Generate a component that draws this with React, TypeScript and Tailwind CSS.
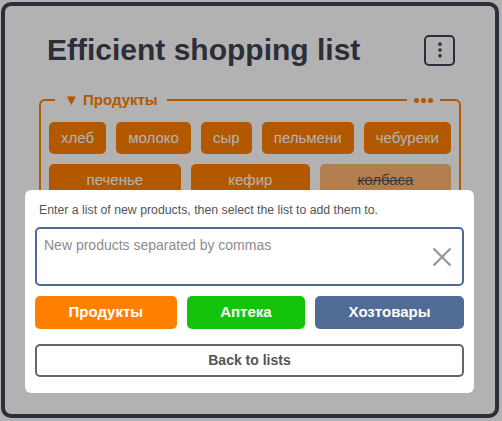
import { EllipsisVertical } from 'lucide-react';

const products = [
    { name: 'хлеб', done: false },
    { name: 'молоко', done: false },
    { name: 'сыр', done: false },
    { name: 'пельмени', done: false },
    { name: 'чебуреки', done: false },
    { name: 'печенье', done: false },
    { name: 'кефир', done: false },
    { name: 'колбаса', done: true },
];

const lists = [
    { name: 'Продукты', color: 'bg-[#ff7f00]' },
    { name: 'Аптека', color: 'bg-[#14c40c]' },
    { name: 'Хозтовары', color: 'bg-[#506b94]' },
];

const App = () => {
    return (
        <div className="h-[421px] bg-white font-['Liberation_Sans',Arial,sans-serif] overflow-hidden">
            <div className="ml-px mt-[2px] w-[498px] h-[416px] border-4 border-[#3f4353] rounded-[10px] bg-white px-[34px] pt-[26px] overflow-hidden">
                <div className="flex items-center justify-between pl-[8px] pr-[6px]">
                    <h1 className="text-[30px] leading-9 font-bold text-[#3f4353]">Efficient shopping list</h1>
                    <button className="w-[31px] h-[31px] border-2 border-[#3f4353] rounded-[5px] flex items-center justify-center text-[#3f4353]">
                        <EllipsisVertical size={20} strokeWidth={2.4} />
                    </button>
                </div>

                <div className="relative mt-[22px]">
                    <fieldset className="border-2 border-[#ff8000] rounded-md px-2 pt-3 pb-2">
                        <legend className="ml-[6px] px-[9px] text-[15px] leading-5 font-bold text-[#ff8000]">▼ Продукты</legend>
                        <div className="flex flex-wrap gap-[10px]">
                            {products.map(p =>
                                <div key={p.name} className={p.done
                                    ? "flex-auto text-center px-3 py-[5px] rounded-[5px] bg-[#ffb572] text-[#555] line-through text-[15px] leading-[22px]"
                                    : "flex-auto text-center px-3 py-[5px] rounded-[5px] bg-[#ff8000] text-white text-[15px] leading-[22px]"}>
                                    {p.name}
                                </div>
                            )}
                        </div>
                    </fieldset>
                    <div className="absolute top-[5px] right-[21px] h-[10px] w-[33px] bg-white flex items-center justify-center gap-[2px]">
                        <span className="w-[5px] h-[5px] rounded-full bg-[#ff8000]"></span>
                        <span className="w-[5px] h-[5px] rounded-full bg-[#ff8000]"></span>
                        <span className="w-[5px] h-[5px] rounded-full bg-[#ff8000]"></span>
                    </div>
                </div>
            </div>

            {/* add products dialog */}
            <div className="fixed inset-0 bg-black/30">
                <div className="absolute left-[25px] top-[190px] w-[449px] bg-white rounded-md px-[10px] pt-[12px] pb-[16px]">
                    <p className="px-1 text-[12.3px] leading-4 text-[#555]">Enter a list of new products, then select the list to add them to.</p>
                    <div className="relative mt-[9px]">
                        <textarea
                            autoFocus
                            placeholder="New products separated by commas"
                            className="block w-full h-[59px] border-2 border-[#4f6a93] rounded-[5px] p-[7px] text-[14px] leading-[18px] resize-none outline-none placeholder:text-[#8c8c8c]"
                        />
                        <svg className="absolute right-[12px] top-1/2 -translate-y-1/2" width="20" height="19" viewBox="0 0 20 19">
                            <path d="M1.5 1 L18.5 18 M18.5 1 L1.5 18" stroke="#999" strokeWidth="2.4" fill="none" />
                        </svg>
                    </div>
                    <div className="mt-[10px] flex gap-[10px]">
                        {lists.map(l =>
                            <button key={l.name} className={`flex-auto h-[33px] px-4 rounded-[5px] text-white font-bold text-[15px] ${l.color}`}>{l.name}</button>
                        )}
                    </div>
                    <button className="mt-[15px] w-full h-[33px] border-2 border-[#666] rounded-[5px] text-[#555] font-bold text-[14px] bg-white">Back to lists</button>
                </div>
            </div>
        </div>
    )
}

export default App
